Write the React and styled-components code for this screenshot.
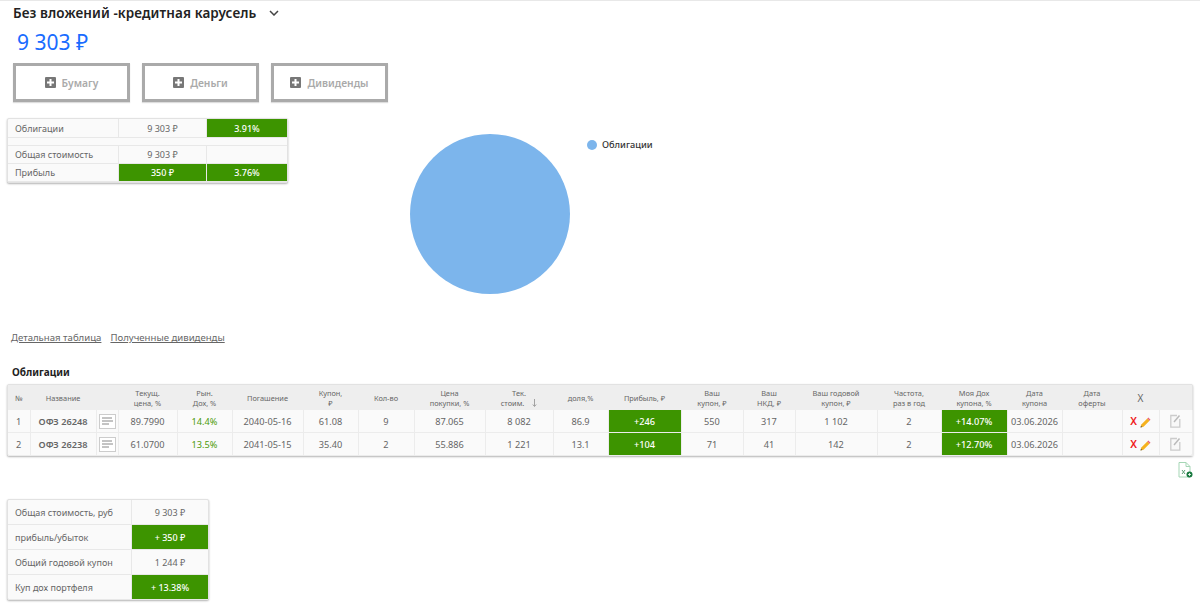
import React from "react";
import styled, { createGlobalStyle } from "styled-components";

const GlobalStyle = createGlobalStyle`
  html, body { margin: 0; padding: 0; background: #fff; }
  body { font-family: "Noto Sans", Tahoma, sans-serif; color: #555; }
`;

const Page = styled.div`
  box-sizing: border-box;
  width: 1200px;
  height: 616px;
  overflow: hidden;
  border-top: 1px solid #e8e8e8;
  padding: 0 7px;
`;

const TitleRow = styled.div`
  display: flex;
  align-items: center;
  gap: 13px;
  height: 23px;
  padding: 0 0 1px 6px;
`;

const Title = styled.h1`
  margin: 0;
  font: 600 13.5px "Noto Sans", sans-serif;
  letter-spacing: 0.1px;
  color: #222;
`;

const Total = styled.div`
  margin: 0 0 0 10px;
  height: 38px;
  font: 400 21px/35px "Noto Sans", sans-serif;
  color: #1a6cff;
`;

const Buttons = styled.div`
  display: flex;
  gap: 12px;
  margin: 0 0 0 6px;
  padding-bottom: 16px;
`;

const AddButton = styled.button`
  box-sizing: border-box;
  width: 117px;
  height: 39px;
  display: flex;
  align-items: center;
  justify-content: center;
  gap: 6px;
  padding: 0;
  background: #fff;
  border: 3px solid #aaa;
  box-shadow: 0 1px 1px #ddd;
  font: 600 10.3px "Noto Sans", sans-serif;
  color: #aaa;
`;

const ChartRow = styled.div`
  display: flex;
  height: 211px;
`;

const Card = styled.div`
  box-sizing: border-box;
  border: 1px solid #e2e2e2;
  border-radius: 2px;
  box-shadow: 0 1px 2px rgba(0, 0, 0, 0.3);
  background: #fafafa;
`;

const Summary = styled(Card)`
  display: grid;
  grid-template-columns: 111px 88px 80px;
  grid-template-rows: 19px 8px 18px 18px;
  width: 281px;
  height: 65px;
  font-size: 9px;
`;

const Cell = styled.div`
  box-sizing: border-box;
  display: flex;
  align-items: center;
  justify-content: ${(p) => (p.$label ? "flex-start" : "center")};
  padding-left: ${(p) => (p.$label ? "7px" : 0)};
  border-right: ${(p) => (p.$end ? "0" : "1px solid #e8e8e8")};
  border-bottom: 1px solid #e8e8e8;
  background: ${(p) => (p.$good ? "#3d9400" : "transparent")};
  color: ${(p) => (p.$good ? "#fff" : "#666")};
  font-weight: ${(p) => (p.$good ? 500 : 400)};
`;

const Spacer = styled.div`
  grid-column: 1 / -1;
  border-bottom: 1px solid #e8e8e8;
`;

const Chart = styled.div`
  display: flex;
  align-items: flex-start;
  margin-left: 122px;
`;

const Legend = styled.div`
  display: flex;
  align-items: center;
  gap: 5px;
  margin: 20px 0 0 17px;
  font-size: 9.2px;
  font-weight: 500;
  color: #333;
`;

const Dot = styled.span`
  width: 10px;
  height: 10px;
  border-radius: 50%;
  background: #7cb5ec;
`;

const Links = styled.div`
  display: flex;
  gap: 9px;
  margin: 2px 0 0 4px;
  height: 16px;
`;

const TabLink = styled.a`
  font-size: 9.6px;
  line-height: 14px;
  color: #666;
  text-decoration: underline;
`;

const SectionTitle = styled.h2`
  margin: 16px 0 4px 5px;
  height: 18px;
  font: 700 10px/18px "Noto Sans", sans-serif;
  color: #222;
`;

const TableCard = styled(Card)`
  width: 1186px;
  height: 72px;
  margin-top: -1px;
`;

const Grid = styled.table`
  width: 100%;
  table-layout: fixed;
  border-collapse: collapse;
`;

const Head = styled.th`
  height: 25px;
  padding: 0;
  background: #eee;
  font-weight: 400;
  font-size: ${(p) => (p.$big ? "10px" : "7.4px")};
  line-height: 10px;
  color: #666;
`;

const SortArrow = styled.svg`
  margin-left: 8px;
  vertical-align: -1px;
`;

const Data = styled.td`
  height: 22px;
  padding: 0;
  text-align: center;
  border-right: 1px solid #ececec;
  border-bottom: 1px solid #ececec;
  background: ${(p) => (p.$good ? "#3d9400" : "transparent")};
  color: ${(p) => (p.$good ? "#fff" : p.$green ? "#4c9a0a" : "#666")};
  font-size: 9.2px;
  font-weight: ${(p) => (p.$bold ? 600 : p.$good ? 500 : 400)};
`;

const Del = styled.span`
  font-weight: 600;
  font-size: 10.5px;
  color: #f01818;
  margin-right: 3px;
`;

const IconCell = styled.span`
  display: inline-flex;
  align-items: center;
  justify-content: center;
  vertical-align: middle;
`;

const ExportRow = styled.div`
  display: flex;
  justify-content: flex-end;
  padding-top: 6px;
  height: 43px;
  box-sizing: border-box;
`;

const Totals = styled(Card)`
  display: grid;
  grid-template-columns: 124px 76px;
  grid-auto-rows: 25px;
  width: 202px;
  height: 101px;
  font-size: 9px;
`;

const ChevronIcon = () => (
  <svg width="10" height="6" viewBox="0 0 10 6">
    <path d="M1 1l4 4 4-4" fill="none" stroke="#444" strokeWidth="1.500" />
  </svg>
);

const PlusIcon = () => (
  <svg width="11" height="11" viewBox="0 0 11 11">
    <rect width="11" height="11" rx="1" fill="#777" />
    <path d="M5.500 2v7M2 5.500h7" stroke="#fff" strokeWidth="2" />
  </svg>
);

const NoteIcon = () => (
  <svg width="17" height="15" viewBox="0 0 17 15">
    <rect x="0.500" y="0.500" width="16" height="14" fill="#fff" stroke="#ccc" />
    <path d="M3 4h10M3 7h11M3 10h7" stroke="#888" strokeWidth="1" />
  </svg>
);

const PencilIcon = () => (
  <svg width="11" height="11" viewBox="0 0 11 11">
    <path d="M0.500 10.500l0.800-3 6-6 2.200 2.200-6 6z" fill="#f5b21f" />
    <path d="M7.300 1.500l1-1 2.200 2.200-1 1z" fill="#e8607a" />
    <path d="M0.500 10.500l0.500-1.800 1.300 1.300z" fill="#555" />
  </svg>
);

const EditIcon = () => (
  <svg width="11" height="14" viewBox="0 0 11 14">
    <path d="M7 1.500H0.800v11.700h9V5" fill="#f8f8f8" stroke="#ccc" strokeWidth="1.300" />
    <path d="M4 8l5.500-6.500" stroke="#bbb" strokeWidth="1.500" />
  </svg>
);

const ExcelIcon = () => (
  <svg width="15" height="16" viewBox="0 0 15 16">
    <path d="M1 0.500h7l4 4V15H1z" fill="#fff" stroke="#a5d6b5" />
    <path d="M8 0.500v4h4" fill="none" stroke="#a5d6b5" />
    <path d="M4 8l3 4M7 8l-3 4" stroke="#5a9e73" strokeWidth="1" />
    <circle cx="11.500" cy="12.500" r="3" fill="#1a7a40" />
    <path d="M10 12.500h3M11.500 11v3" stroke="#fff" strokeWidth="0.800" />
  </svg>
);

const columns = [
  { w: 22, head: "№" },
  { w: 66, head: "Название" },
  { w: 22, head: "" },
  { w: 59, head: ["Текущ.", "цена, %"] },
  { w: 55, head: ["Рын.", "Дох, %"] },
  { w: 71, head: "Погашение" },
  { w: 55, head: ["Купон,", "₽"] },
  { w: 56, head: "Кол-во" },
  { w: 71, head: ["Цена", "покупки, %"] },
  { w: 68, head: ["Тек.", "стоим."], sort: true },
  { w: 55, head: "доля,%" },
  { w: 73, head: "Прибыль, ₽" },
  { w: 62, head: ["Ваш", "купон, ₽"] },
  { w: 52, head: ["Ваш", "НКД, ₽"] },
  { w: 82, head: ["Ваш годовой", "купон, ₽"] },
  { w: 64, head: ["Частота,", "раз в год"] },
  { w: 66, head: ["Моя Дох", "купона, %"] },
  { w: 55, head: ["Дата", "купона"] },
  { w: 60, head: ["Дата", "оферты"] },
  { w: 37, head: "X", big: true },
  { w: 33, head: "" },
];

const rows = [
  ["1", "ОФЗ 26248", "89.7990", "14.4%", "2040-05-16", "61.08", "9", "87.065", "8 082", "86.9", "+246", "550", "317", "1 102", "2", "+14.07%", "03.06.2026"],
  ["2", "ОФЗ 26238", "61.0700", "13.5%", "2041-05-15", "35.40", "2", "55.886", "1 221", "13.1", "+104", "71", "41", "142", "2", "+12.70%", "03.06.2026"],
];

const Bonds = () => (
  <TableCard>
    <Grid>
      <colgroup>
        {columns.map((c, i) => (
          <col key={i} style={{ width: c.w }} />
        ))}
      </colgroup>
      <thead>
        <tr>
          {columns.map((c, i) => (
            <Head key={i} $big={c.big}>
              {Array.isArray(c.head) ? (
                <>
                  {c.head[0]}
                  <br />
                  {c.head[1]}
                  {c.sort && (
                    <SortArrow width="5" height="8" viewBox="0 0 5 8">
                      <path d="M2.500 0v7M0.800 5.500l1.700 2 1.700-2" fill="none" stroke="#999" strokeWidth="0.900" />
                    </SortArrow>
                  )}
                </>
              ) : (
                c.head
              )}
            </Head>
          ))}
        </tr>
      </thead>
      <tbody>
        {rows.map((r) => (
          <tr key={r[0]}>
            <Data>{r[0]}</Data>
            <Data $bold>{r[1]}</Data>
            <Data>
              <IconCell>
                <NoteIcon />
              </IconCell>
            </Data>
            <Data>{r[2]}</Data>
            <Data $green>{r[3]}</Data>
            <Data>{r[4]}</Data>
            <Data>{r[5]}</Data>
            <Data>{r[6]}</Data>
            <Data>{r[7]}</Data>
            <Data>{r[8]}</Data>
            <Data>{r[9]}</Data>
            <Data $good>{r[10]}</Data>
            <Data>{r[11]}</Data>
            <Data>{r[12]}</Data>
            <Data>{r[13]}</Data>
            <Data>{r[14]}</Data>
            <Data $good>{r[15]}</Data>
            <Data>{r[16]}</Data>
            <Data />
            <Data>
              <Del>X</Del>
              <IconCell>
                <PencilIcon />
              </IconCell>
            </Data>
            <Data>
              <IconCell>
                <EditIcon />
              </IconCell>
            </Data>
          </tr>
        ))}
      </tbody>
    </Grid>
  </TableCard>
);

export default function App() {
  return (
    <Page>
      <GlobalStyle />
      <TitleRow>
        <Title>Без вложений -кредитная карусель</Title>
        <ChevronIcon />
      </TitleRow>
      <Total>9 303 ₽</Total>
      <Buttons>
        {["Бумагу", "Деньги", "Дивиденды"].map((b) => (
          <AddButton key={b}>
            <PlusIcon />
            {b}
          </AddButton>
        ))}
      </Buttons>
      <ChartRow>
        <Summary>
          <Cell $label>Облигации</Cell>
          <Cell>9 303 ₽</Cell>
          <Cell $good $end>3.91%</Cell>
          <Spacer />
          <Cell $label>Общая стоимость</Cell>
          <Cell>9 303 ₽</Cell>
          <Cell $end />
          <Cell $label>Прибыль</Cell>
          <Cell $good>350 ₽</Cell>
          <Cell $good $end>3.76%</Cell>
        </Summary>
        <Chart>
          <svg width="160" height="176" viewBox="0 0 160 176">
            <circle cx="80" cy="96" r="80" fill="#7cb5ec" />
          </svg>
          <Legend>
            <Dot />
            Облигации
          </Legend>
        </Chart>
      </ChartRow>
      <Links>
        <TabLink>Детальная таблица</TabLink>
        <TabLink>Полученные дивиденды</TabLink>
      </Links>
      <SectionTitle>Облигации</SectionTitle>
      <Bonds />
      <ExportRow>
        <ExcelIcon />
      </ExportRow>
      <Totals>
        <Cell $label>Общая стоимость, руб</Cell>
        <Cell $end>9 303 ₽</Cell>
        <Cell $label>прибыль/убыток</Cell>
        <Cell $good $end>+ 350 ₽</Cell>
        <Cell $label>Общий годовой купон</Cell>
        <Cell $end>1 244 ₽</Cell>
        <Cell $label>Куп дох портфеля</Cell>
        <Cell $good $end>+ 13.38%</Cell>
      </Totals>
    </Page>
  );
}
